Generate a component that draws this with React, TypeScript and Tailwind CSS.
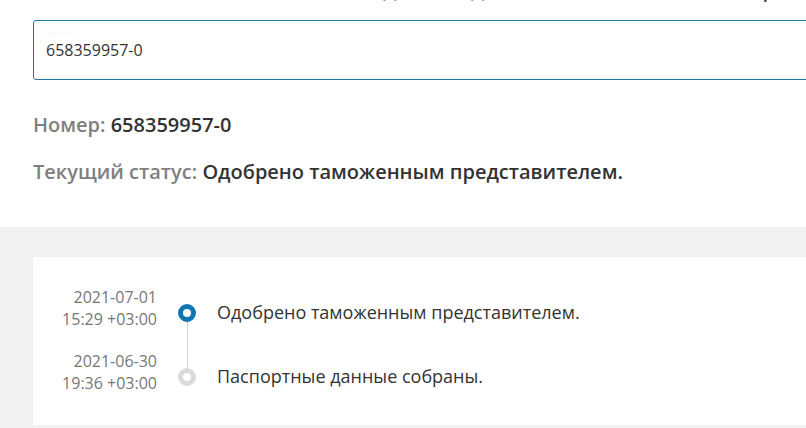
const events = [
  { date: '2021-07-01', time: '15:29 +03:00', text: 'Одобрено таможенным представителем.', active: true },
  { date: '2021-06-30', time: '19:36 +03:00', text: 'Паспортные данные собраны.', active: false },
];

function TimelineItem({
  date,
  time,
  text,
  active,
  last,
}: {
  date: string;
  time: string;
  text: string;
  active: boolean;
  last: boolean;
}) {
  return (
    <div className="flex h-[64px]">
      <div className="w-[124px] pt-[1px] text-right text-[16px] leading-[22px] text-[#777]">
        <div>{date}</div>
        <div>{time}</div>
      </div>
      <div className="flex w-[60px] flex-col items-center pt-[19px]">
        <div
          className={
            active
              ? 'h-[18px] w-[18px] shrink-0 rounded-full border-[5px] border-[#0f75b3] bg-white'
              : 'h-[18px] w-[18px] shrink-0 rounded-full border-[5px] border-[#dadada] bg-white'
          }
        />
        {!last && <div className="mb-[-19px] w-px flex-1 bg-[#d4d4d4]" />}
      </div>
      <div className="pt-[15px] text-[18px] leading-[24px] text-[#333]">{text}</div>
    </div>
  );
}

export default function App() {
  return (
    <div className="h-[428px] w-[806px] overflow-hidden bg-white font-['Open_Sans',sans-serif]">
      <div className="w-[900px] pl-[33px]">
        <div className="h-[20px] overflow-hidden">
          <p className="-mt-[29px] ml-[350px] whitespace-nowrap text-[24px] leading-[32px] text-[#333]">
            для входа заполните ниже номер или пароль
          </p>
        </div>
        <div className="flex h-[60px] flex-col justify-center rounded-[3px] border border-[#1d79a6] pl-[12px]">
          <div className="text-[10px] leading-[12px] text-[#f7f9fa]">Номер</div>
          <div className="text-[16px] leading-[22px] text-[#333]">658359957-0</div>
          <div className="h-[12px]" />
        </div>
        <div className="pt-[32px] text-[20px] font-semibold leading-[26px]">
          <span className="text-[#808080]">Номер: </span>
          <span className="text-[#333]">658359957-0</span>
        </div>
        <div className="pt-[21px] text-[20px] font-semibold leading-[26px]">
          <span className="text-[#808080]">Текущий статус: </span>
          <span className="text-[#333]">Одобрено таможенным представителем.</span>
        </div>
        <div className="h-[42px]" />
      </div>
      <div className="bg-[#f1f1f1] pb-[4px] pl-[33px] pt-[30px]">
        <div className="w-[900px] bg-white pb-[12px] pt-[28px]">
          {events.map((e, i) => (
            <TimelineItem key={e.date} {...e} last={i === events.length - 1} />
          ))}
        </div>
      </div>
    </div>
  );
}
